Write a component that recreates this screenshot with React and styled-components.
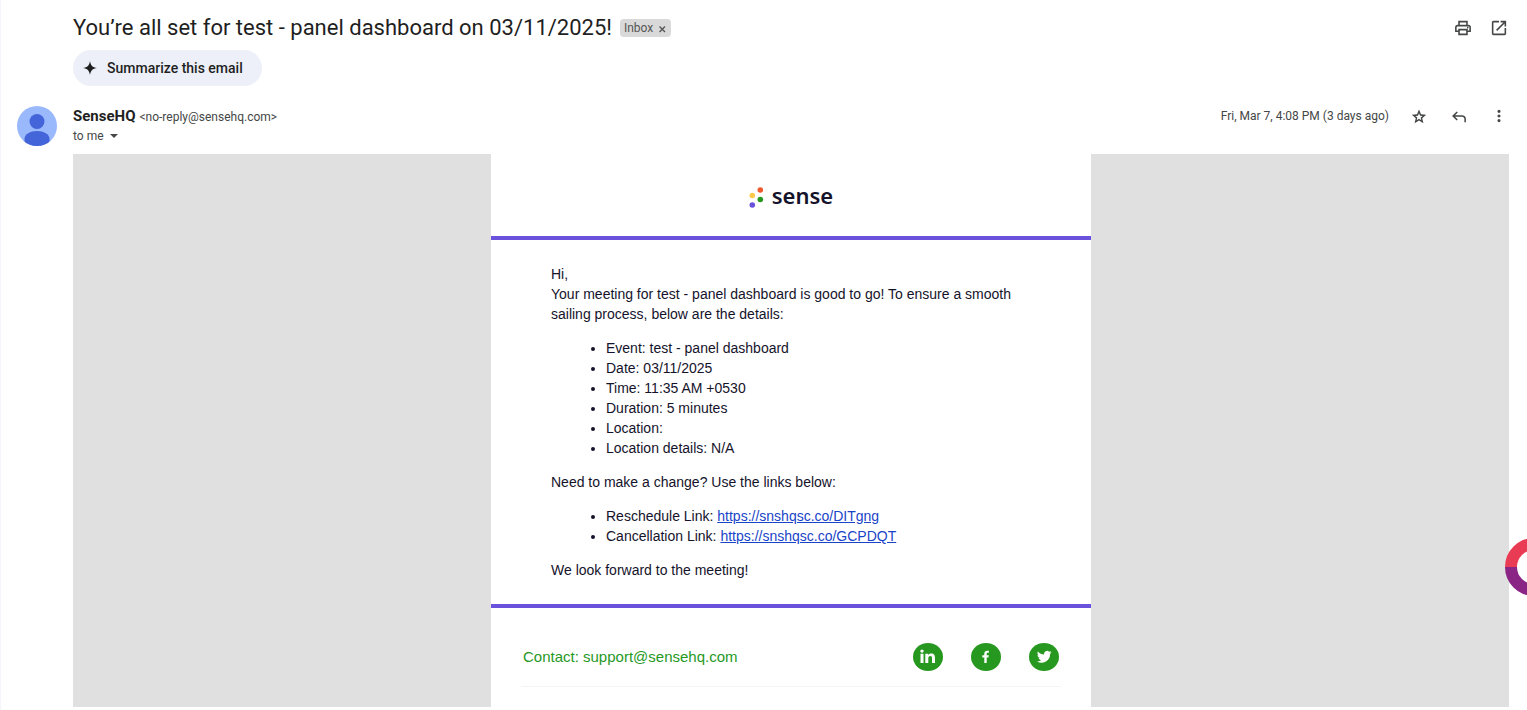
import React from "react";
import styled, { createGlobalStyle } from "styled-components";

const GlobalStyle = createGlobalStyle`
  *, *::before, *::after { box-sizing: border-box; }
  body {
    margin: 0;
    background: #fff;
    color: #1f1f1f;
    font-family: Roboto, "Liberation Sans", sans-serif;
  }
`;

const Page = styled.main`
  min-height: 100vh;
  border-left: 1px solid #f3f5fb;
  padding: 12px 18px 3px 16px;
`;

const SubjectBar = styled.header`
  display: flex;
  align-items: center;
  height: 32px;
  padding-left: 56px;
`;

const Subject = styled.h1`
  margin: 0;
  font-size: 22px;
  font-weight: 400;
  line-height: 32px;
`;

const Chip = styled.span`
  display: flex;
  align-items: center;
  gap: 5px;
  height: 18px;
  margin-left: 8px;
  padding: 0 4px;
  border-radius: 4px;
  background: #d9d9d9;
  color: #555;
  font-size: 12px;
  line-height: 18px;
`;

const PlainButton = styled.button`
  display: flex;
  align-items: center;
  justify-content: center;
  flex: none;
  width: ${(p) => p.$size}px;
  height: ${(p) => p.$size}px;
  padding: 0;
  border: 0;
  background: none;
  color: ${(p) => p.$color || "#444746"};
  cursor: pointer;
`;

const Actions = styled.div`
  display: flex;
  align-items: center;
  gap: ${(p) => p.$gap}px;
  margin-left: auto;
`;

const SummarizeButton = styled.button`
  display: flex;
  align-items: center;
  gap: 9px;
  height: 36px;
  margin: 6px 0 20px 56px;
  padding: 0 19px 0 9px;
  border: 0;
  border-radius: 18px;
  background: #edf0f9;
  color: #1f1f1f;
  font-family: inherit;
  font-size: 14px;
  font-weight: 500;
  cursor: pointer;
`;

const MessageHeader = styled.section`
  display: flex;
  align-items: flex-start;
  height: 48px;
`;

const Avatar = styled.svg`
  flex: none;
  width: 40px;
  height: 40px;
  margin-right: 16px;
`;

const Sender = styled.div`
  font-size: 12px;
  line-height: 20px;
  color: #444746;
`;

const SenderLine = styled.div`
  display: flex;
  align-items: baseline;
  gap: 4px;
  height: 20px;
`;

const SenderName = styled.strong`
  color: #1f1f1f;
  font-size: 15px;
  font-weight: 700;
`;

const Recipient = styled.button`
  display: flex;
  align-items: center;
  gap: 6px;
  padding: 0;
  border: 0;
  background: none;
  color: inherit;
  font: inherit;
  cursor: pointer;
`;

const Sent = styled.time`
  font-size: 12px;
  line-height: 20px;
  color: #444746;
`;

const MessageBody = styled.article`
  margin-left: 56px;
  background: #e0e0e0;
`;

const Card = styled.div`
  max-width: 600px;
  margin: 0 auto;
  background: #fff;
  color: #15132b;
  font-family: "Liberation Sans", Arial, sans-serif;
`;

const Brand = styled.div`
  display: flex;
  align-items: center;
  justify-content: center;
  gap: 8px;
  height: 82px;
  font-family: "Noto Sans", sans-serif;
  font-size: 22px;
  font-weight: 600;
  line-height: 32px;
`;

const Copy = styled.div`
  padding: 24px 60px;
  border: solid #6b52dc;
  border-width: 4px 0;
  font-size: 14px;
  line-height: 20px;

  p { margin: 0 0 14px; }
  p:last-child { margin: 0; }
`;

const Details = styled.ul`
  margin: 0 0 14px;
  padding-left: 55px;
`;

const Link = styled.a`
  color: #1a44c8;
`;

const Footer = styled.footer`
  padding: 20px 30px;
`;

const ContactRow = styled.div`
  display: flex;
  align-items: center;
  height: 59px;
  padding: 0 2px;
  border-bottom: 1px solid #f5f5f5;
`;

const Contact = styled.a`
  color: #27981f;
  font-size: 15px;
  line-height: 20px;
  text-decoration: none;
`;

const Social = styled.a`
  display: block;
  height: 28px;
`;

const Widget = styled.button`
  position: fixed;
  right: -36px;
  bottom: 114px;
  width: 58px;
  height: 58px;
  padding: 0;
  border: 0;
  background: none;
  cursor: pointer;
`;

const details = [
  "Event: test - panel dashboard",
  "Date: 03/11/2025",
  "Time: 11:35 AM +0530",
  "Duration: 5 minutes",
  "Location:",
  "Location details: N/A",
];

const links = [
  ["Reschedule Link:", "https://snshqsc.co/DITgng"],
  ["Cancellation Link:", "https://snshqsc.co/GCPDQT"],
];

const icons = {
  print: {
    box: "-0.600 -0.600 25.200 25.200",
    d: "M16 8V5H8v3H6V3h12v5h-2zM4 10h16H4zm14 2.500q.425 0 .713-.288T19 11.500t-.288-.712T18 10.500t-.712.288T17 11.500t.288.713.712.287zM16 19v-4H8v4h8zm2 2H6v-4H2v-6q0-1.275.875-2.138T5 8h14q1.275 0 2.138.863T22 11v6h-4v4zm2-6v-4q0-.425-.288-.712T19 10H5q-.425 0-.712.288T4 11v4h2v-2h12v2h2z",
  },
  open: {
    box: "-0.600 -0.600 25.200 25.200",
    d: "M5 21q-.825 0-1.413-.587T3 19V5q0-.825.587-1.413T5 3h7v2H5v14h14v-7h2v7q0 .825-.587 1.413T19 21H5zm4.700-5.300-1.400-1.400L17.600 5H14V3h7v7h-2V6.400l-9.300 9.300z",
  },
  star: {
    box: "-2 -3 28 28",
    d: "m8.850 16.825 3.150-1.900 3.150 1.925-.825-3.600 2.775-2.400-3.650-.325-1.450-3.400-1.450 3.375-3.650.325 2.775 2.425-.825 3.575zM5.825 21l1.625-7.025L2 9.250l7.200-.625L12 2l2.800 6.625 7.200.625-5.450 4.725L18.175 21 12 17.275 5.825 21z",
  },
  reply: {
    box: "-1 -2 26 26",
    d: "M19 19v-4q0-1.250-.875-2.125T16 12H6.825l3.600 3.600L9 17l-6-6 6-6 1.425 1.400-3.600 3.600H16q2.075 0 3.538 1.463T21 15v4h-2z",
  },
  more: {
    box: "-1 -1 26 26",
    d: "M12 20q-.825 0-1.413-.587T10 18t.587-1.413T12 16t1.413.587T14 18t-.587 1.413T12 20zm0-6q-.825 0-1.413-.587T10 12t.587-1.413T12 10t1.413.587T14 12t-.587 1.413T12 14zm0-6q-.825 0-1.413-.587T10 6t.587-1.413T12 4t1.413.587T14 6t-.587 1.413T12 8z",
  },
};

function IconButton({ name, label }) {
  return (
    <PlainButton type="button" $size={20} aria-label={label}>
      <svg width="20" height="20" viewBox={icons[name].box} fill="currentColor">
        <path d={icons[name].d} />
      </svg>
    </PlainButton>
  );
}

const socials = [
  ["LinkedIn", "M7.500 10.800h3v9.200h-3zM9 6.400a1.700 1.700 0 1 1 0 3.400 1.700 1.700 0 0 1 0-3.400zM12.300 10.800h2.900v1.300c.5-.9 1.500-1.600 3-1.600 3 0 3.800 1.900 3.800 4.500v5h-3v-4.500c0-1.200-.1-2.400-1.700-2.400s-2 1.100-2 2.400v4.500h-3z"],
  ["Facebook", "M13.300 20v-5.400h-2v-2.300h2v-1.500c0-2 1.100-3.100 3-3.100.8 0 1.600.1 1.600.1v2h-1c-.9 0-1.200.5-1.200 1.200v1.300h2.100l-.4 2.300h-1.700V20z"],
  ["Twitter", "M22.500 9.200a6 6 0 0 1-1.700.5c.6-.4 1.100-1 1.300-1.700-.6.400-1.200.6-1.900.8a3 3 0 0 0-5.100 2.700c-2.500-.1-4.700-1.300-6.200-3.100-.8 1.400-.4 3.100.9 4-.5 0-1-.2-1.300-.4 0 1.500 1 2.700 2.400 3-.4.100-.9.100-1.300 0 .4 1.200 1.500 2.100 2.800 2.100A6 6 0 0 1 8 18.400a8.500 8.500 0 0 0 13.100-7.600c.6-.4 1.100-.9 1.400-1.600z"],
];

export default function App() {
  return (
    <>
      <GlobalStyle />
      <Page>
        <SubjectBar>
          <Subject>You’re all set for test - panel dashboard on 03/11/2025!</Subject>
          <Chip>
            Inbox
            <PlainButton type="button" $size={9} $color="#555" aria-label="Remove label Inbox">
              <svg width="9" height="9" viewBox="0 0 9 9" stroke="currentColor" strokeWidth="1.400">
                <path d="M1.500 2.500l5.500 5.500M7 2.500l-5.500 5.500" />
              </svg>
            </PlainButton>
          </Chip>
          <Actions $gap={16}>
            <IconButton name="print" label="Print all" />
            <IconButton name="open" label="In new window" />
          </Actions>
        </SubjectBar>

        <SummarizeButton type="button">
          <svg width="16" height="16" viewBox="0 0 16 16" fill="currentColor">
            <path d="M8 1C8.600 5.400 10.600 7.400 15 8 10.600 8.600 8.600 10.600 8 15 7.400 10.600 5.400 8.600 1 8 5.400 7.400 7.400 5.400 8 1z" />
          </svg>
          Summarize this email
        </SummarizeButton>

        <MessageHeader>
          <Avatar viewBox="0 0 40 40" aria-hidden="true">
            <defs>
              <clipPath id="avatar-clip"><circle cx="20" cy="20" r="20" /></clipPath>
            </defs>
            <g clipPath="url(#avatar-clip)">
              <rect width="40" height="40" fill="#9ab8fc" />
              <circle cx="20" cy="15.500" r="7.500" fill="#4464d9" />
              <path d="M7.500 40v-7c0-4.800 5.800-8 12.500-8s12.500 3.200 12.500 8v7z" fill="#4464d9" />
            </g>
          </Avatar>
          <Sender>
            <SenderLine>
              <SenderName>SenseHQ</SenderName>
              <span>&lt;no-reply@sensehq.com&gt;</span>
            </SenderLine>
            <Recipient type="button">
              to me
              <svg width="8" height="4" viewBox="0 0 8 4" fill="currentColor"><path d="M0 0h8L4 4z" /></svg>
            </Recipient>
          </Sender>
          <Actions $gap={20}>
            <Sent>Fri, Mar 7, 4:08 PM (3 days ago)</Sent>
            <IconButton name="star" label="Star" />
            <IconButton name="reply" label="Reply" />
            <IconButton name="more" label="More" />
          </Actions>
        </MessageHeader>

        <MessageBody>
          <Card>
            <Brand>
              <svg width="15" height="27" viewBox="0 0 15 27">
                <circle cx="11.300" cy="8" r="2.800" fill="#f0592b" />
                <circle cx="3.300" cy="13.500" r="2.800" fill="#fdc84b" />
                <circle cx="11.300" cy="17.500" r="2.800" fill="#27981f" />
                <circle cx="3.300" cy="23" r="2.800" fill="#6b52dc" />
              </svg>
              sense
            </Brand>
            <Copy>
              <p>
                Hi,
                <br />
                Your meeting for test - panel dashboard is good to go! To ensure a smooth
                sailing process, below are the details:
              </p>
              <Details>
                {details.map((text) => <li key={text}>{text}</li>)}
              </Details>
              <p>Need to make a change? Use the links below:</p>
              <Details>
                {links.map(([label, url]) => (
                  <li key={url}>{label} <Link href={url}>{url}</Link></li>
                ))}
              </Details>
              <p>We look forward to the meeting!</p>
            </Copy>
            <Footer>
              <ContactRow>
                <Contact href="mailto:support@sensehq.com">Contact: support@sensehq.com</Contact>
                <Actions $gap={28}>
                  {socials.map(([name, d]) => (
                    <Social key={name} href="#" aria-label={name}>
                      <svg width="30" height="28" viewBox="0 0 30 28">
                        <ellipse cx="15" cy="14" rx="15" ry="14" fill="#27981f" />
                        <path d={d} fill="#fff" />
                      </svg>
                    </Social>
                  ))}
                </Actions>
              </ContactRow>
            </Footer>
          </Card>
        </MessageBody>
      </Page>
      <Widget type="button" aria-label="Open assistant">
        <svg width="58" height="58" viewBox="0 0 58 58" fill="none" strokeWidth="12">
          <circle cx="29" cy="29" r="20" fill="#fff" />
          <path d="M6 29a23 23 0 0 1 46 0" stroke="#ea3b54" />
          <path d="M6 29a23 23 0 0 0 46 0" stroke="#8a2585" />
        </svg>
      </Widget>
    </>
  );
}
